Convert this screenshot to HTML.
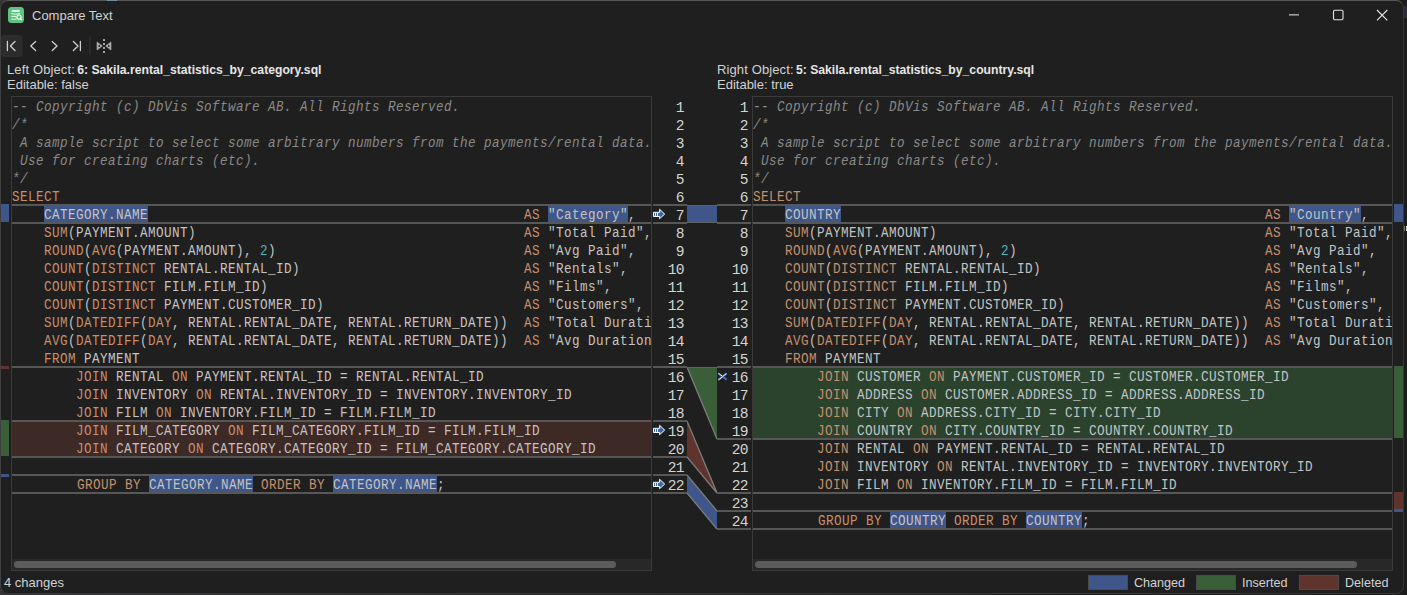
<!DOCTYPE html>
<html><head><meta charset="utf-8"><style>
html,body{margin:0;padding:0;}
body{width:1407px;height:595px;overflow:hidden;background:linear-gradient(90deg,#353537 0%,#262626 40%,#1c1c1c 100%);position:relative;font-family:"Liberation Sans",sans-serif;}
#win{position:absolute;left:0;top:0;width:1404px;height:594px;border-radius:8px;background:#1f1f1f;overflow:hidden}
#wb{position:absolute;left:0;top:0;width:1402px;height:592px;border:1px solid #363636;border-top-color:#565656;border-left-color:#404040;border-radius:8px;pointer-events:none}
.code{position:absolute;height:456px;overflow:hidden;font-family:"Liberation Mono",monospace;font-size:14px;letter-spacing:0.489px;color:#c4c4c4;white-space:pre;transform:scaleX(0.9);transform-origin:0 0;width:711px !important}
.ln{height:18px;line-height:18px;padding-top:1px;box-sizing:border-box}
.c{color:#8a8a8a;font-style:italic}
.k{color:#c68f6c}
.n{color:#4fb3bd}
.nums{position:absolute;font-family:"Liberation Mono",monospace;font-size:14.6px;letter-spacing:-0.6px;color:#d4d4d4;text-align:right;white-space:pre}
.ui{position:absolute;white-space:nowrap;color:#d2d2d2}
.ui b{color:#e6e6e6;letter-spacing:0;margin-left:-1.5px}
</style></head><body>
<div id="win">
<div class="ui" style="left:32px;top:8px;font-size:13px">Compare Text</div>
<div class="ui" style="left:7px;top:62px;font-size:13px;letter-spacing:0.12px">Left Object: <b style="font-size:12.2px">6: Sakila.rental_statistics_by_category.sql</b></div>
<div class="ui" style="left:7px;top:77px;font-size:13px">Editable: false</div>
<div class="ui" style="left:717px;top:62px;font-size:13px;letter-spacing:0.12px">Right Object: <b style="font-size:12.2px">5: Sakila.rental_statistics_by_country.sql</b></div>
<div class="ui" style="left:717px;top:77px;font-size:13px">Editable: true</div>
<div class="ui" style="left:4px;top:575px;font-size:13px">4 changes</div>
<div style="position:absolute;left:12px;top:422px;width:639px;height:34px;background:#3d2926;"></div><div style="position:absolute;left:753px;top:368px;width:639px;height:70px;background:#2b422d;"></div><div style="position:absolute;left:44px;top:206px;width:104px;height:16px;background:#3e5689;"></div><div style="position:absolute;left:548px;top:206px;width:80px;height:16px;background:#3e5689;"></div><div style="position:absolute;left:149px;top:476px;width:104px;height:16px;background:#3e5689;"></div><div style="position:absolute;left:333px;top:476px;width:104px;height:16px;background:#3e5689;"></div><div style="position:absolute;left:785px;top:206px;width:56px;height:16px;background:#3e5689;"></div><div style="position:absolute;left:1289px;top:206px;width:72px;height:16px;background:#3e5689;"></div><div style="position:absolute;left:890px;top:512px;width:56px;height:16px;background:#3e5689;"></div><div style="position:absolute;left:1026px;top:512px;width:56px;height:16px;background:#3e5689;"></div><div style="position:absolute;left:12px;top:204px;width:639px;height:2px;background:#575757;"></div><div style="position:absolute;left:653px;top:204px;width:34px;height:2px;background:#575757;"></div><div style="position:absolute;left:12px;top:222px;width:639px;height:2px;background:#575757;"></div><div style="position:absolute;left:653px;top:222px;width:34px;height:2px;background:#575757;"></div><div style="position:absolute;left:12px;top:366px;width:639px;height:2px;background:#575757;"></div><div style="position:absolute;left:653px;top:366px;width:34px;height:2px;background:#575757;"></div><div style="position:absolute;left:12px;top:420px;width:639px;height:2px;background:#575757;"></div><div style="position:absolute;left:653px;top:420px;width:34px;height:2px;background:#575757;"></div><div style="position:absolute;left:12px;top:456px;width:639px;height:2px;background:#575757;"></div><div style="position:absolute;left:653px;top:456px;width:34px;height:2px;background:#575757;"></div><div style="position:absolute;left:12px;top:474px;width:639px;height:2px;background:#575757;"></div><div style="position:absolute;left:653px;top:474px;width:34px;height:2px;background:#575757;"></div><div style="position:absolute;left:12px;top:492px;width:639px;height:2px;background:#575757;"></div><div style="position:absolute;left:653px;top:492px;width:34px;height:2px;background:#575757;"></div><div style="position:absolute;left:753px;top:204px;width:639px;height:2px;background:#575757;"></div><div style="position:absolute;left:717px;top:204px;width:34px;height:2px;background:#575757;"></div><div style="position:absolute;left:753px;top:222px;width:639px;height:2px;background:#575757;"></div><div style="position:absolute;left:717px;top:222px;width:34px;height:2px;background:#575757;"></div><div style="position:absolute;left:753px;top:366px;width:639px;height:2px;background:#575757;"></div><div style="position:absolute;left:717px;top:366px;width:34px;height:2px;background:#575757;"></div><div style="position:absolute;left:753px;top:438px;width:639px;height:2px;background:#575757;"></div><div style="position:absolute;left:717px;top:438px;width:34px;height:2px;background:#575757;"></div><div style="position:absolute;left:753px;top:492px;width:639px;height:2px;background:#575757;"></div><div style="position:absolute;left:717px;top:492px;width:34px;height:2px;background:#575757;"></div><div style="position:absolute;left:753px;top:510px;width:639px;height:2px;background:#575757;"></div><div style="position:absolute;left:717px;top:510px;width:34px;height:2px;background:#575757;"></div><div style="position:absolute;left:753px;top:528px;width:639px;height:2px;background:#575757;"></div><div style="position:absolute;left:717px;top:528px;width:34px;height:2px;background:#575757;"></div><div class="code" style="left:12px;top:97px;width:639px"><div class="ln"><span class="c">-- Copyright (c) DbVis Software AB. All Rights Reserved.</span></div><div class="ln"><span class="c">/*</span></div><div class="ln"><span class="c"> A sample script to select some arbitrary numbers from the payments/rental data.</span></div><div class="ln"><span class="c"> Use for creating charts (etc).</span></div><div class="ln"><span class="c">*/</span></div><div class="ln"><span class="k">SELECT</span></div><div class="ln">    CATEGORY.NAME                                               <span class="k">AS</span> &quot;Category&quot;,</div><div class="ln">    <span class="k">SUM</span>(PAYMENT.AMOUNT)                                         <span class="k">AS</span> &quot;Total Paid&quot;,</div><div class="ln">    <span class="k">ROUND</span>(<span class="k">AVG</span>(PAYMENT.AMOUNT), <span class="n">2</span>)                               <span class="k">AS</span> &quot;Avg Paid&quot;,</div><div class="ln">    <span class="k">COUNT</span>(<span class="k">DISTINCT</span> RENTAL.RENTAL_ID)                            <span class="k">AS</span> &quot;Rentals&quot;,</div><div class="ln">    <span class="k">COUNT</span>(<span class="k">DISTINCT</span> FILM.FILM_ID)                                <span class="k">AS</span> &quot;Films&quot;,</div><div class="ln">    <span class="k">COUNT</span>(<span class="k">DISTINCT</span> PAYMENT.CUSTOMER_ID)                         <span class="k">AS</span> &quot;Customers&quot;,</div><div class="ln">    <span class="k">SUM</span>(<span class="k">DATEDIFF</span>(<span class="k">DAY</span>, RENTAL.RENTAL_DATE, RENTAL.RETURN_DATE))  <span class="k">AS</span> &quot;Total Duration&quot;,</div><div class="ln">    <span class="k">AVG</span>(<span class="k">DATEDIFF</span>(<span class="k">DAY</span>, RENTAL.RENTAL_DATE, RENTAL.RETURN_DATE))  <span class="k">AS</span> &quot;Avg Duration&quot;,</div><div class="ln">    <span class="k">FROM</span> PAYMENT</div><div class="ln">        <span class="k">JOIN</span> RENTAL <span class="k">ON</span> PAYMENT.RENTAL_ID = RENTAL.RENTAL_ID</div><div class="ln">        <span class="k">JOIN</span> INVENTORY <span class="k">ON</span> RENTAL.INVENTORY_ID = INVENTORY.INVENTORY_ID</div><div class="ln">        <span class="k">JOIN</span> FILM <span class="k">ON</span> INVENTORY.FILM_ID = FILM.FILM_ID</div><div class="ln">        <span class="k">JOIN</span> FILM_CATEGORY <span class="k">ON</span> FILM_CATEGORY.FILM_ID = FILM.FILM_ID</div><div class="ln">        <span class="k">JOIN</span> CATEGORY <span class="k">ON</span> CATEGORY.CATEGORY_ID = FILM_CATEGORY.CATEGORY_ID</div><div class="ln">&#8203;</div><div class="ln" style="padding-left:1.11px">        <span class="k">GROUP</span> <span class="k">BY</span> CATEGORY.NAME <span class="k">ORDER</span> <span class="k">BY</span> CATEGORY.NAME;</div></div><div class="code" style="left:753px;top:97px;width:639px"><div class="ln"><span class="c">-- Copyright (c) DbVis Software AB. All Rights Reserved.</span></div><div class="ln"><span class="c">/*</span></div><div class="ln"><span class="c"> A sample script to select some arbitrary numbers from the payments/rental data.</span></div><div class="ln"><span class="c"> Use for creating charts (etc).</span></div><div class="ln"><span class="c">*/</span></div><div class="ln"><span class="k">SELECT</span></div><div class="ln">    COUNTRY                                                     <span class="k">AS</span> &quot;Country&quot;,</div><div class="ln">    <span class="k">SUM</span>(PAYMENT.AMOUNT)                                         <span class="k">AS</span> &quot;Total Paid&quot;,</div><div class="ln">    <span class="k">ROUND</span>(<span class="k">AVG</span>(PAYMENT.AMOUNT), <span class="n">2</span>)                               <span class="k">AS</span> &quot;Avg Paid&quot;,</div><div class="ln">    <span class="k">COUNT</span>(<span class="k">DISTINCT</span> RENTAL.RENTAL_ID)                            <span class="k">AS</span> &quot;Rentals&quot;,</div><div class="ln">    <span class="k">COUNT</span>(<span class="k">DISTINCT</span> FILM.FILM_ID)                                <span class="k">AS</span> &quot;Films&quot;,</div><div class="ln">    <span class="k">COUNT</span>(<span class="k">DISTINCT</span> PAYMENT.CUSTOMER_ID)                         <span class="k">AS</span> &quot;Customers&quot;,</div><div class="ln">    <span class="k">SUM</span>(<span class="k">DATEDIFF</span>(<span class="k">DAY</span>, RENTAL.RENTAL_DATE, RENTAL.RETURN_DATE))  <span class="k">AS</span> &quot;Total Duration&quot;,</div><div class="ln">    <span class="k">AVG</span>(<span class="k">DATEDIFF</span>(<span class="k">DAY</span>, RENTAL.RENTAL_DATE, RENTAL.RETURN_DATE))  <span class="k">AS</span> &quot;Avg Duration&quot;,</div><div class="ln">    <span class="k">FROM</span> PAYMENT</div><div class="ln">        <span class="k">JOIN</span> CUSTOMER <span class="k">ON</span> PAYMENT.CUSTOMER_ID = CUSTOMER.CUSTOMER_ID</div><div class="ln">        <span class="k">JOIN</span> ADDRESS <span class="k">ON</span> CUSTOMER.ADDRESS_ID = ADDRESS.ADDRESS_ID</div><div class="ln">        <span class="k">JOIN</span> CITY <span class="k">ON</span> ADDRESS.CITY_ID = CITY.CITY_ID</div><div class="ln">        <span class="k">JOIN</span> COUNTRY <span class="k">ON</span> CITY.COUNTRY_ID = COUNTRY.COUNTRY_ID</div><div class="ln">        <span class="k">JOIN</span> RENTAL <span class="k">ON</span> PAYMENT.RENTAL_ID = RENTAL.RENTAL_ID</div><div class="ln">        <span class="k">JOIN</span> INVENTORY <span class="k">ON</span> RENTAL.INVENTORY_ID = INVENTORY.INVENTORY_ID</div><div class="ln">        <span class="k">JOIN</span> FILM <span class="k">ON</span> INVENTORY.FILM_ID = FILM.FILM_ID</div><div class="ln">&#8203;</div><div class="ln" style="padding-left:1.11px">        <span class="k">GROUP</span> <span class="k">BY</span> COUNTRY <span class="k">ORDER</span> <span class="k">BY</span> COUNTRY;</div></div><div class="nums" style="left:651px;top:98px;width:33px"><div class="ln">1</div><div class="ln">2</div><div class="ln">3</div><div class="ln">4</div><div class="ln">5</div><div class="ln">6</div><div class="ln">7</div><div class="ln">8</div><div class="ln">9</div><div class="ln">10</div><div class="ln">11</div><div class="ln">12</div><div class="ln">13</div><div class="ln">14</div><div class="ln">15</div><div class="ln">16</div><div class="ln">17</div><div class="ln">18</div><div class="ln">19</div><div class="ln">20</div><div class="ln">21</div><div class="ln">22</div></div><div class="nums" style="left:715px;top:98px;width:33px"><div class="ln">1</div><div class="ln">2</div><div class="ln">3</div><div class="ln">4</div><div class="ln">5</div><div class="ln">6</div><div class="ln">7</div><div class="ln">8</div><div class="ln">9</div><div class="ln">10</div><div class="ln">11</div><div class="ln">12</div><div class="ln">13</div><div class="ln">14</div><div class="ln">15</div><div class="ln">16</div><div class="ln">17</div><div class="ln">18</div><div class="ln">19</div><div class="ln">20</div><div class="ln">21</div><div class="ln">22</div><div class="ln">23</div><div class="ln">24</div></div><svg style="position:absolute;left:687px;top:0" width="30" height="595" viewBox="687 0 30 595">
<polygon points="687,205 717,205 717,223 687,223" fill="#3e5689"/>
<polygon points="687,367 717,367 717,439" fill="#3a5f38"/>
<polygon points="687,421 687,457 717,493" fill="#5f342d"/>
<polygon points="687,475 717,511 717,529 687,493" fill="#3e5689"/>
<g stroke="#7c7c7c" stroke-width="1.3" fill="none">
<path d="M687,367 L717,439 M687,421 L717,493 M687,457 L717,493 M687,475 L717,511 M687,493 L717,529"/>
</g>
<g stroke="#626262" stroke-width="1" fill="none">
<path d="M687,205.5 H717 M687,222.5 H717 M687,367.5 H717"/>
</g>
</svg><div style="position:absolute;left:11px;top:96px;width:639px;height:473px;border:1px solid #3a3a3a"></div><div style="position:absolute;left:752px;top:96px;width:639px;height:473px;border:1px solid #3a3a3a"></div><div style="position:absolute;left:12px;top:559px;width:639px;height:11px;background:#282828;"></div><div style="position:absolute;left:14px;top:561px;width:602px;height:7px;background:#5c5c5c;border-radius:4px"></div><div style="position:absolute;left:753px;top:559px;width:639px;height:11px;background:#282828;"></div><div style="position:absolute;left:755px;top:561px;width:602px;height:7px;background:#5c5c5c;border-radius:4px"></div><div style="position:absolute;left:1px;top:204px;width:8px;height:18px;background:#3e5689;"></div><div style="position:absolute;left:1px;top:366px;width:8px;height:3px;background:#5f342d;"></div><div style="position:absolute;left:1px;top:420px;width:8px;height:36px;background:#3a5f38;"></div><div style="position:absolute;left:1px;top:474px;width:8px;height:3px;background:#3e5689;"></div><div style="position:absolute;left:1394px;top:204px;width:9px;height:18px;background:#3e5689;"></div><div style="position:absolute;left:1394px;top:366px;width:9px;height:72px;background:#3a5f38;"></div><div style="position:absolute;left:1394px;top:492px;width:9px;height:17px;background:#5f342d;"></div><div style="position:absolute;left:1394px;top:509px;width:9px;height:3px;background:#3e5689;"></div><svg style="position:absolute;left:0;top:0" width="1407" height="595"><rect x="8" y="7" width="16" height="16" rx="3.5" fill="#5cc480"/><ellipse cx="15.7" cy="11" rx="4.3" ry="1.1" fill="#fff"/><path d="M11.3 13.6 Q15.7 14.8 20.2 13.6" stroke="#e8f6ec" stroke-width="1" fill="none"/><path d="M11.3 16.4 H16.2 M11.3 18.9 Q13.5 19.6 16.6 19" stroke="#e8f6ec" stroke-width="1" fill="none"/><circle cx="19" cy="17.1" r="2.1" stroke="#fff" stroke-width="1.1" fill="none"/><path d="M20.5 18.6 L22 20.2" stroke="#fff" stroke-width="1.2"/><rect x="1" y="35" width="21.5" height="22" rx="3" fill="#2c2c2c"/><g stroke="#cfcfcf" stroke-width="1.3" fill="none" stroke-linecap="round" stroke-linejoin="round"><path d="M7.4 41.5 V50.5 M15 41.5 L10.4 46 L15 50.5"/><path d="M35.6 41.5 L30.8 46 L35.6 50.5"/><path d="M52.2 41.5 L57 46 L52.2 50.5"/><path d="M73.4 41.5 L78 46 L73.4 50.5 M80.4 41.5 V50.5"/></g><rect x="89.5" y="36" width="1" height="19" fill="#333"/><path d="M97 41.9 L102.3 46 L97 50.1 Z M111 41.9 L105.7 46 L111 50.1 Z" fill="#a8a8a8" stroke="#b4b4b4" stroke-width="0.6" stroke-linejoin="round"/><ellipse cx="99.3" cy="46" rx="0.8" ry="1.1" fill="#1f1f1f"/><ellipse cx="108.7" cy="46" rx="0.8" ry="1.1" fill="#1f1f1f"/><g fill="#a0a0a0"><rect x="103" y="39" width="2" height="2"/><rect x="103" y="43" width="2" height="2"/><rect x="103" y="47" width="2" height="2"/><rect x="103" y="51" width="2" height="2"/></g><rect x="1289" y="14" width="10" height="1.6" fill="#a0a0a0"/><rect x="1333.5" y="10.3" width="9.5" height="9.5" rx="1.2" fill="none" stroke="#e6e6e6" stroke-width="1.1"/><path d="M1377 10 L1387.3 20.3 M1387.3 10 L1377 20.3" stroke="#e6e6e6" stroke-width="1.1"/></svg><svg style="position:absolute;left:651px;top:206px" width="16" height="16" viewBox="0 0 16 16"><path d="M2.5 6.3 H8.6 V3.3 L13.7 8.1 L8.6 12.7 V10.5 H2.5 Z" fill="#3b68a6" stroke="#fff" stroke-width="1" stroke-linejoin="miter"/><path d="M4.5 7 V10 M6.5 7 V10" stroke="#e8eef6" stroke-width="1"/></svg><svg style="position:absolute;left:651px;top:422px" width="16" height="16" viewBox="0 0 16 16"><path d="M2.5 6.3 H8.6 V3.3 L13.7 8.1 L8.6 12.7 V10.5 H2.5 Z" fill="#3b68a6" stroke="#fff" stroke-width="1" stroke-linejoin="miter"/><path d="M4.5 7 V10 M6.5 7 V10" stroke="#e8eef6" stroke-width="1"/></svg><svg style="position:absolute;left:651px;top:476px" width="16" height="16" viewBox="0 0 16 16"><path d="M2.5 6.3 H8.6 V3.3 L13.7 8.1 L8.6 12.7 V10.5 H2.5 Z" fill="#3b68a6" stroke="#fff" stroke-width="1" stroke-linejoin="miter"/><path d="M4.5 7 V10 M6.5 7 V10" stroke="#e8eef6" stroke-width="1"/></svg><svg style="position:absolute;left:715px;top:369px" width="16" height="16" viewBox="0 0 16 16"><path d="M3.6 4.6 L11.6 10.6 M11.6 4.6 L3.6 10.6" stroke="#3e6db0" stroke-width="2"/><path d="M3.2 4.1 L7.6 7.4 M7.6 7.8 L3.2 11.1 M7.9 7.3 L11.5 4.4" stroke="#fff" stroke-width="0.9"/></svg><div style="position:absolute;left:1088px;top:575px;width:38px;height:13px;background:#3e5689;border:1px solid #4a4a4a;box-sizing:content-box"></div><div class="ui" style="left:1134px;top:576px;font-size:12.6px">Changed</div><div style="position:absolute;left:1196px;top:575px;width:38px;height:13px;background:#3a5f38;border:1px solid #4a4a4a;box-sizing:content-box"></div><div class="ui" style="left:1242px;top:576px;font-size:12.6px">Inserted</div><div style="position:absolute;left:1299px;top:575px;width:38px;height:13px;background:#5f342d;border:1px solid #4a4a4a;box-sizing:content-box"></div><div class="ui" style="left:1345px;top:576px;font-size:12.6px">Deleted</div>
</div><div id="wb"></div><div style="position:absolute;left:1404px;top:6px;width:3px;height:12px;background:#2a2d35"></div><div style="position:absolute;left:107px;top:0;width:10px;height:1px;background:#6b8fa5"></div><div style="position:absolute;left:1404px;top:226px;width:1px;height:5px;background:#7d7a6e"></div><div style="position:absolute;left:1406px;top:226px;width:1px;height:5px;background:#d8d6c8"></div>
</body></html>
